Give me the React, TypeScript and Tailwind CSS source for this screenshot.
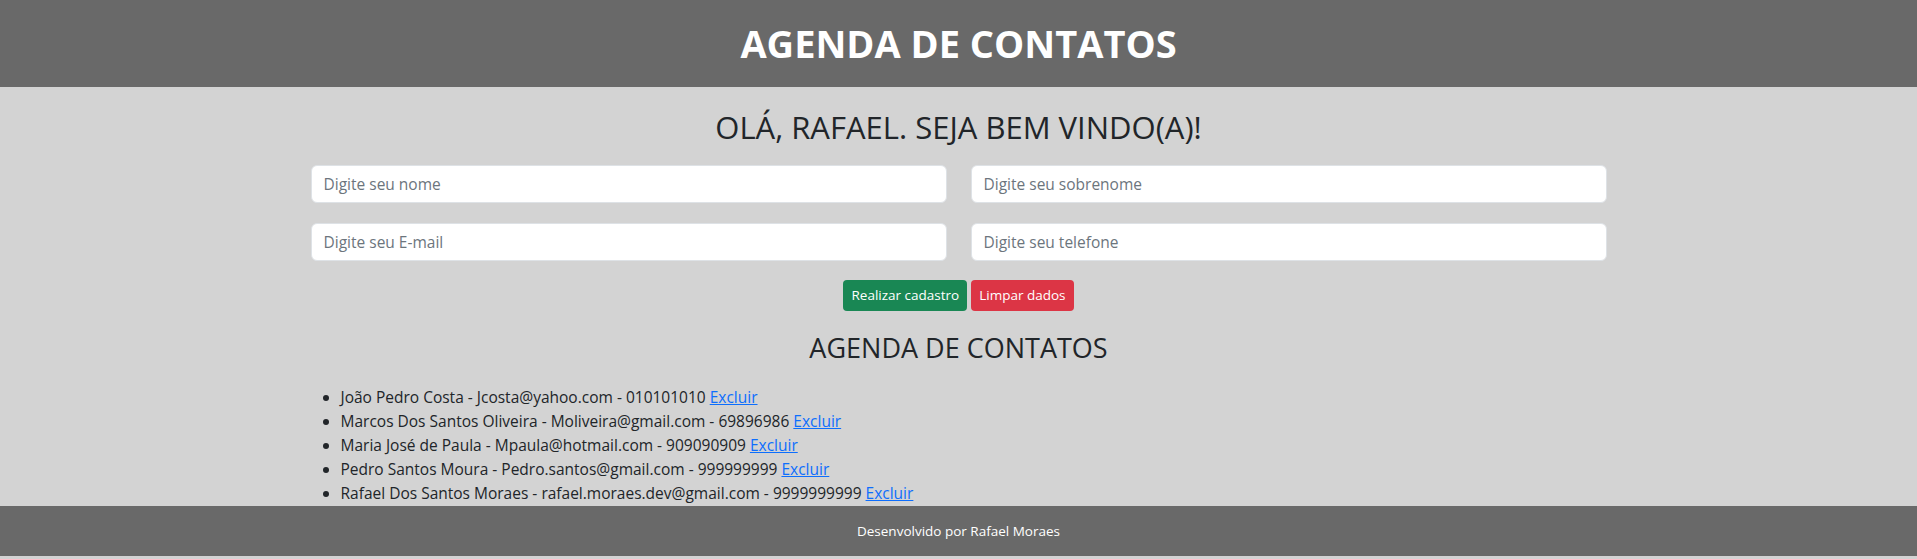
import { useState } from "react";

type Contato = {
  nome: string;
  email: string;
  telefone: string;
};

const iniciais: Contato[] = [
  { nome: "João Pedro Costa", email: "Jcosta@yahoo.com", telefone: "010101010" },
  { nome: "Marcos Dos Santos Oliveira", email: "Moliveira@gmail.com", telefone: "69896986" },
  { nome: "Maria José de Paula", email: "Mpaula@hotmail.com", telefone: "909090909" },
  { nome: "Pedro Santos Moura", email: "Pedro.santos@gmail.com", telefone: "999999999" },
  { nome: "Rafael Dos Santos Moraes", email: "rafael.moraes.dev@gmail.com", telefone: "9999999999" },
];

export default function App() {
  const [contatos, setContatos] = useState<Contato[]>(iniciais);
  const [form, setForm] = useState({ nome: "", sobrenome: "", email: "", telefone: "" });

  const cadastrar = () => {
    if (!form.nome) return;
    setContatos([
      ...contatos,
      { nome: `${form.nome} ${form.sobrenome}`.trim(), email: form.email, telefone: form.telefone },
    ]);
    setForm({ nome: "", sobrenome: "", email: "", telefone: "" });
  };

  const inputClass =
    "h-[38px] w-full rounded-md border border-[#dee2e6] bg-white px-3 text-[15.5px] text-[#212529] placeholder:text-[#6c757d] outline-none";

  return (
    <div
      className="flex h-[559px] flex-col overflow-hidden bg-[#d3d3d3] text-[#212529]"
      style={{ fontFamily: '"Open Sans", "Noto Sans", sans-serif' }}
    >
      <header className="flex h-[87px] shrink-0 items-center justify-center bg-[#696969]">
        <h1 className="text-[38px] font-bold leading-[1.2] text-white">AGENDA DE CONTATOS</h1>
      </header>

      <main className="mx-auto w-[1320px] px-3">
        <h2 className="mt-[21px] text-center text-[31px] leading-[38px]">
          OLÁ, RAFAEL. SEJA BEM VINDO(A)!
        </h2>

        <form
          className="mt-[19px] grid grid-cols-2 gap-x-6 gap-y-5"
          onSubmit={(e) => e.preventDefault()}
        >
          <input
            className={inputClass}
            placeholder="Digite seu nome"
            value={form.nome}
            onChange={(e) => setForm({ ...form, nome: e.target.value })}
          />
          <input
            className={inputClass}
            placeholder="Digite seu sobrenome"
            value={form.sobrenome}
            onChange={(e) => setForm({ ...form, sobrenome: e.target.value })}
          />
          <input
            className={inputClass}
            placeholder="Digite seu E-mail"
            value={form.email}
            onChange={(e) => setForm({ ...form, email: e.target.value })}
          />
          <input
            className={inputClass}
            placeholder="Digite seu telefone"
            value={form.telefone}
            onChange={(e) => setForm({ ...form, telefone: e.target.value })}
          />
        </form>

        <div className="mt-[19px] flex justify-center gap-1">
          <button
            onClick={cadastrar}
            className="h-[31px] rounded-[4px] bg-[#198754] px-2 text-[13.5px] text-white"
          >
            Realizar cadastro
          </button>
          <button
            onClick={() => setForm({ nome: "", sobrenome: "", email: "", telefone: "" })}
            className="h-[31px] rounded-[4px] bg-[#dc3545] px-2 text-[13.5px] text-white"
          >
            Limpar dados
          </button>
        </div>

        <h3 className="mt-5 text-center text-[27px] leading-[34px]">AGENDA DE CONTATOS</h3>

        <ul className="mt-5 list-disc pl-[30px] text-[15.5px] leading-6">
          {contatos.map((c, i) => (
            <li key={i}>
              {c.nome} - {c.email} - {c.telefone}{" "}
              <a
                href="#"
                className="text-[#0d6efd] underline"
                onClick={(e) => {
                  e.preventDefault();
                  setContatos(contatos.filter((_, j) => j !== i));
                }}
              >
                Excluir
              </a>
            </li>
          ))}
        </ul>
      </main>

      <footer className="mt-auto flex h-[50px] shrink-0 items-center justify-center bg-[#696969] text-[13.5px] text-white">
        Desenvolvido por Rafael Moraes
      </footer>
      <div className="h-[3px] shrink-0" />
    </div>
  );
}
